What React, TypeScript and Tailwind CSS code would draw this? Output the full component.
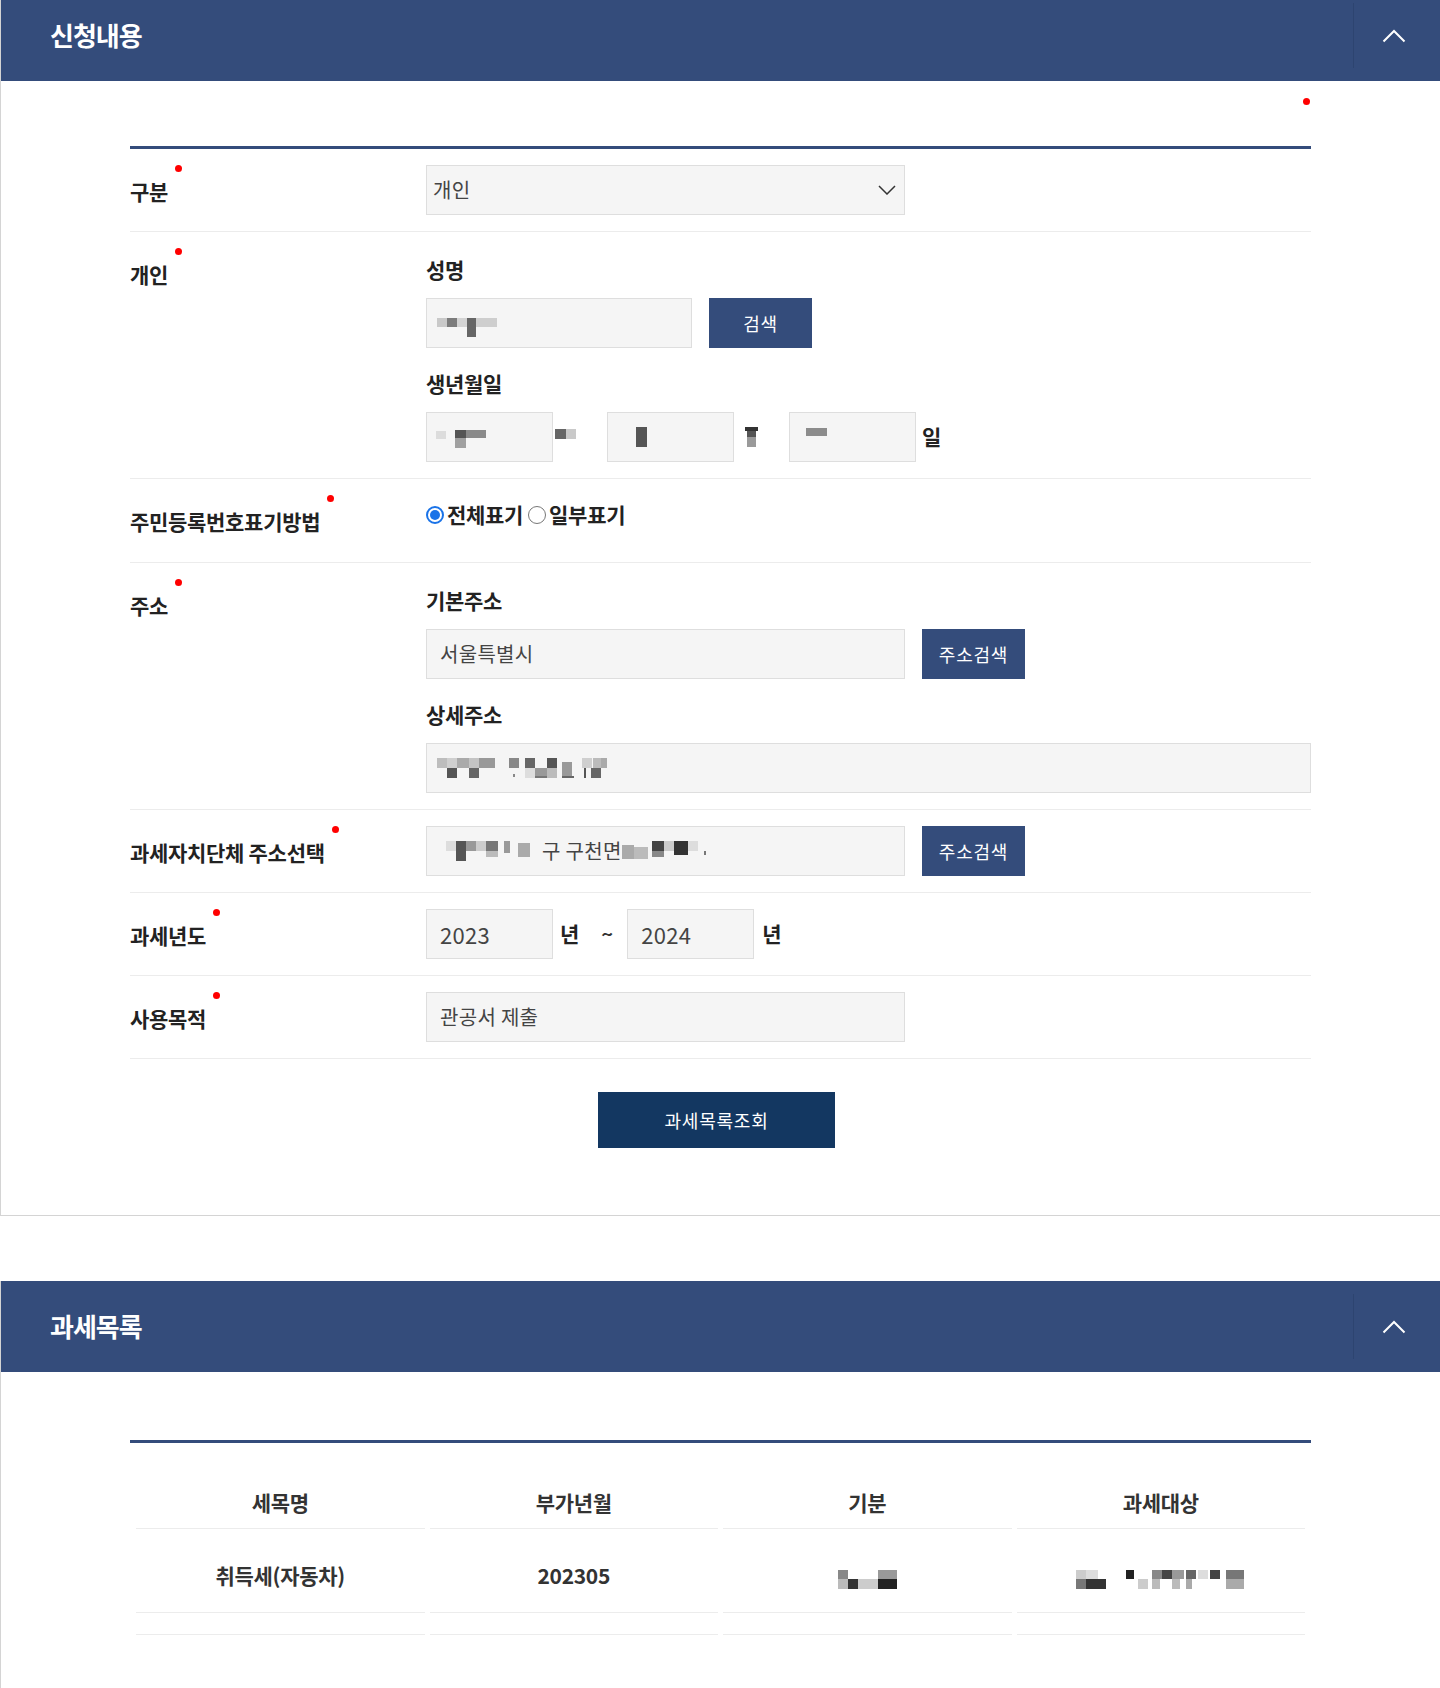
import type { ReactNode } from "react"

type Block = [number, number, number, number, string]

// blurred (mosaic) personal data shown in the form
function Mosaic({ w, h, blocks, className }: { w: number; h: number; blocks: Block[]; className?: string }) {
  return (
    <svg width={w} height={h} viewBox={`0 0 ${w} ${h}`} className={className}>
      {blocks.map(([x, y, bw, bh, c], i) => (
        <rect key={i} x={x} y={y} width={bw} height={bh} fill={c} />
      ))}
    </svg>
  )
}

function ChevronUp() {
  return (
    <svg width="24" height="14" viewBox="0 0 24 14" fill="none">
      <polyline points="1.5,12.5 12,2 22.5,12.5" stroke="#ffffff" strokeWidth="2" />
    </svg>
  )
}

function PanelHeader({ title }: { title: string }) {
  return (
    <div className="flex h-[91px] items-center justify-between bg-[#344c7b] pl-[49px]">
      <h2 className="pb-[3px] text-[26px] font-bold tracking-[-1px] text-white">{title}</h2>
      <div className="my-[13px] flex w-[87px] items-center justify-center self-stretch border-l border-[#2d4470] pr-[6px]">
        <ChevronUp />
      </div>
    </div>
  )
}

function Row({ label, children }: { label: string; children: ReactNode }) {
  return (
    <div className="flex border-b border-[#ececec]">
      <div className="w-[296px] shrink-0 pt-[27px]">
        <span className="relative inline-block text-[21px] font-bold leading-[30px] tracking-[-0.3px] text-[#222]">
          {label}
          <span className="absolute right-[-14px] top-[-11px] h-[7px] w-[7px] rounded-full bg-[#ff0000]" />
        </span>
      </div>
      <div className="flex-1 pb-[16px] pt-[16px]">{children}</div>
    </div>
  )
}

function SubLabel({ children, first }: { children: ReactNode; first?: boolean }) {
  return (
    <div
      className={
        "mb-[8px] h-[42px] text-[21px] font-bold leading-[42px] tracking-[-0.3px] text-[#222] " +
        (first ? "" : "mt-[14px]")
      }
    >
      {children}
    </div>
  )
}

function Box({ w, children, className }: { w: string; children?: ReactNode; className?: string }) {
  return (
    <div
      className={
        "flex h-[50px] items-center border border-[#dedede] bg-[#f5f5f5] text-[20px] tracking-[0.3px] text-[#444] " +
        w +
        " " +
        (className ?? "")
      }
    >
      {children}
    </div>
  )
}

function NavyButton({ children }: { children: ReactNode }) {
  return (
    <button className="ml-[17px] h-[50px] w-[103px] bg-[#344c7b] text-[18px] tracking-[0.8px] text-white">
      {children}
    </button>
  )
}

function Radio({ checked, label }: { checked?: boolean; label: string }) {
  return (
    <label className="flex items-center">
      {checked ? (
        <span className="flex h-[18px] w-[18px] items-center justify-center rounded-full border-2 border-[#1a73e8] bg-white">
          <span className="h-[10px] w-[10px] rounded-full bg-[#1a73e8]" />
        </span>
      ) : (
        <span className="ml-[5px] h-[18px] w-[18px] rounded-full border border-[#777] bg-white" />
      )}
      <span className="ml-[3px] text-[21px] font-bold tracking-[-0.3px] text-[#222]">{label}</span>
    </label>
  )
}

export default function App() {
  return (
    <div className="h-[1688px] w-[1440px] overflow-hidden bg-white font-['Noto_Sans_CJK_KR','Noto_Sans',sans-serif]">
      {/* 신청내용 */}
      <section className="-mt-[10px] border-b border-l border-[#d4d4d4]">
        <PanelHeader title="신청내용" />
        <div className="px-[129px] pb-[67px] pt-[17px]">
          <div className="flex justify-end pr-[1px]">
            <span className="h-[7px] w-[7px] rounded-full bg-[#ff0000]" />
          </div>
          <div className="mt-[41px] border-t-[3px] border-[#344c7b]">
            <Row label="구분">
              <Box w="w-[479px]" className="justify-between pl-[6px] pr-[8px]">
                <span>개인</span>
                <svg width="18" height="10" viewBox="0 0 18 10" fill="none">
                  <polyline points="1,1 9,9 17,1" stroke="#333" strokeWidth="1.5" />
                </svg>
              </Box>
            </Row>

            <Row label="개인">
              <SubLabel first>성명</SubLabel>
              <div className="flex">
                <Box w="w-[266px]" className="pl-[10px]">
                  <Mosaic
                    w={60}
                    h={19}
                    className="mt-[8px]"
                    blocks={[
                      [0, 0, 10, 9, "#c9c9c9"],
                      [10, 0, 10, 9, "#7c7c7c"],
                      [20, 0, 10, 9, "#d3d3d3"],
                      [30, 0, 9, 19, "#666"],
                      [39, 0, 21, 9, "#cecece"],
                    ]}
                  />
                </Box>
                <NavyButton>검색</NavyButton>
              </div>
              <SubLabel>생년월일</SubLabel>
              <div className="flex items-center">
                <Box w="w-[127px]" className="pl-[9px]">
                  <Mosaic
                    w={52}
                    h={18}
                    className="mt-[4px]"
                    blocks={[
                      [0, 1, 10, 8, "#dcdcdc"],
                      [19, 0, 11, 8, "#555"],
                      [19, 8, 11, 10, "#a0a0a0"],
                      [30, 0, 20, 8, "#8a8a8a"],
                    ]}
                  />
                </Box>
                <span className="w-[54px] pl-[2px]">
                  <Mosaic
                    w={21}
                    h={10}
                    className="-mt-[6px]"
                    blocks={[
                      [0, 0, 11, 10, "#666"],
                      [11, 0, 10, 10, "#c9c9c9"],
                    ]}
                  />
                </span>
                <Box w="w-[127px]" className="pl-[28px]">
                  <Mosaic w={11} h={20} blocks={[[0, 0, 11, 20, "#555"]]} />
                </Box>
                <span className="w-[55px] pl-[11px]">
                  <Mosaic
                    w={13}
                    h={20}
                    blocks={[
                      [0, 0, 13, 4, "#333"],
                      [2, 4, 9, 6, "#555"],
                      [2, 10, 9, 10, "#9a9a9a"],
                    ]}
                  />
                </span>
                <Box w="w-[127px]" className="pl-[16px]">
                  <Mosaic w={21} h={8} className="-mt-[10px]" blocks={[[0, 0, 21, 8, "#8c8c8c"]]} />
                </Box>
                <span className="ml-[6px] text-[21px] font-bold text-[#222]">일</span>
              </div>
            </Row>

            <Row label="주민등록번호표기방법">
              <div className="h-[51px]">
                <div className="flex h-[40px] items-center">
                  <Radio checked label="전체표기" />
                  <Radio label="일부표기" />
                </div>
              </div>
            </Row>

            <Row label="주소">
              <SubLabel first>기본주소</SubLabel>
              <div className="flex">
                <Box w="w-[479px]" className="pl-[13px]">
                  서울특별시
                </Box>
                <NavyButton>주소검색</NavyButton>
              </div>
              <SubLabel>상세주소</SubLabel>
              <Box w="w-[885px]" className="pl-[10px]">
                <Mosaic
                  w={180}
                  h={20}
                  blocks={[
                    [0, 0, 10, 10, "#bdbdbd"],
                    [10, 0, 10, 10, "#cfcfcf"],
                    [10, 10, 10, 10, "#555"],
                    [20, 0, 12, 10, "#aaa"],
                    [32, 0, 10, 10, "#c4c4c4"],
                    [32, 10, 10, 10, "#666"],
                    [42, 0, 16, 10, "#999"],
                    [72, 0, 10, 10, "#888"],
                    [76, 16, 2, 3, "#888"],
                    [88, 0, 10, 10, "#666"],
                    [88, 10, 10, 10, "#ddd"],
                    [98, 10, 12, 8, "#999"],
                    [98, 18, 12, 2, "#777"],
                    [110, 0, 10, 10, "#555"],
                    [110, 10, 10, 10, "#bbb"],
                    [125, 4, 10, 16, "#999"],
                    [125, 18, 12, 2, "#666"],
                    [145, 0, 10, 10, "#cfcfcf"],
                    [147, 10, 2, 10, "#555"],
                    [156, 0, 8, 10, "#bbb"],
                    [154, 10, 10, 10, "#666"],
                    [164, 0, 6, 10, "#aaa"],
                  ]}
                />
              </Box>
            </Row>

            <Row label="과세자치단체 주소선택">
              <div className="flex">
                <Box w="w-[479px]" className="pl-[19px]">
                  <Mosaic
                    w={90}
                    h={20}
                    blocks={[
                      [0, 0, 10, 10, "#ddd"],
                      [10, 0, 10, 20, "#555"],
                      [20, 0, 10, 10, "#999"],
                      [30, 0, 10, 10, "#ccc"],
                      [40, 0, 12, 10, "#777"],
                      [40, 10, 12, 6, "#bbb"],
                      [58, 0, 6, 12, "#999"],
                      [72, 2, 12, 14, "#aaa"],
                    ]}
                  />
                  <span className="ml-[6px]">구 구천면</span>
                  <Mosaic
                    w={90}
                    h={20}
                    blocks={[
                      [0, 4, 12, 14, "#aaa"],
                      [12, 6, 14, 12, "#bbb"],
                      [30, 0, 12, 10, "#444"],
                      [30, 10, 12, 6, "#888"],
                      [42, 0, 10, 10, "#ccc"],
                      [52, 0, 14, 14, "#333"],
                      [66, 0, 10, 10, "#ddd"],
                      [82, 10, 2, 4, "#777"],
                    ]}
                  />
                </Box>
                <NavyButton>주소검색</NavyButton>
              </div>
            </Row>

            <Row label="과세년도">
              <div className="flex items-center">
                <Box w="w-[127px]" className="pl-[13px] text-[22px]">
                  2023
                </Box>
                <span className="ml-[7px] text-[21px] font-bold text-[#222]">년</span>
                <span className="ml-[22px] text-[20px] font-bold text-[#333]">~</span>
                <Box w="w-[127px]" className="ml-[14px] pl-[13px] text-[22px]">
                  2024
                </Box>
                <span className="ml-[8px] text-[21px] font-bold text-[#222]">년</span>
              </div>
            </Row>

            <Row label="사용목적">
              <Box w="w-[479px]" className="pl-[13px]">
                관공서 제출
              </Box>
            </Row>
          </div>

          <div className="mt-[33px] flex justify-center pr-[8px]">
            <button className="h-[56px] w-[237px] bg-[#133761] text-[18px] tracking-[0.8px] text-white">
              과세목록조회
            </button>
          </div>
        </div>
      </section>

      {/* 과세목록 */}
      <section className="mt-[65px] border-l border-[#d4d4d4]">
        <PanelHeader title="과세목록" />
        <div className="px-[129px] pb-[80px] pt-[68px]">
          <div className="border-t-[3px] border-[#344c7b]">
            <div className="grid grid-cols-4 gap-x-[5px] px-[6px]">
              {["세목명", "부가년월", "기분", "과세대상"].map((h) => (
                <div
                  key={h}
                  className="border-b border-[#ececec] pb-[11px] pt-[44px] text-center text-[21px] font-bold leading-[30px] tracking-[-0.3px] text-[#333]"
                >
                  {h}
                </div>
              ))}
              <div className="border-b border-[#ececec] pb-[22px] pt-[31px] text-center text-[21px] font-bold leading-[30px] tracking-[-0.3px] text-[#333]">
                취득세(자동차)
              </div>
              <div className="border-b border-[#ececec] pb-[22px] pt-[31px] text-center text-[21px] font-bold leading-[30px] tracking-[-0.3px] text-[#333]">
                202305
              </div>
              <div className="flex items-center justify-center border-b border-[#ececec] pb-[22px] pt-[31px]">
                <Mosaic
                  w={59}
                  h={19}
                  className="mt-[8px]"
                  blocks={[
                    [0, 0, 10, 9, "#888"],
                    [0, 9, 10, 10, "#bbb"],
                    [10, 9, 10, 10, "#333"],
                    [20, 9, 20, 10, "#ccc"],
                    [40, 0, 19, 9, "#999"],
                    [40, 9, 19, 10, "#222"],
                  ]}
                />
              </div>
              <div className="flex items-center justify-center border-b border-[#ececec] pb-[22px] pt-[31px]">
                <Mosaic
                  w={170}
                  h={19}
                  className="mt-[8px]"
                  blocks={[
                    [0, 0, 10, 9, "#ccc"],
                    [0, 9, 10, 10, "#777"],
                    [10, 0, 12, 9, "#ddd"],
                    [10, 9, 20, 10, "#333"],
                    [50, 0, 8, 9, "#222"],
                    [62, 9, 10, 10, "#ccc"],
                    [76, 0, 10, 9, "#888"],
                    [76, 9, 8, 10, "#bbb"],
                    [86, 0, 10, 9, "#444"],
                    [96, 0, 12, 9, "#999"],
                    [96, 9, 8, 10, "#bbb"],
                    [110, 0, 10, 9, "#666"],
                    [110, 9, 6, 10, "#aaa"],
                    [122, 0, 10, 9, "#ddd"],
                    [134, 0, 10, 9, "#444"],
                    [150, 0, 18, 9, "#777"],
                    [150, 9, 18, 10, "#aaa"],
                  ]}
                />
              </div>
              {[0, 1, 2, 3].map((i) => (
                <div key={i} className="h-[22px] border-b border-[#ececec]" />
              ))}
            </div>
          </div>
        </div>
      </section>
    </div>
  )
}
